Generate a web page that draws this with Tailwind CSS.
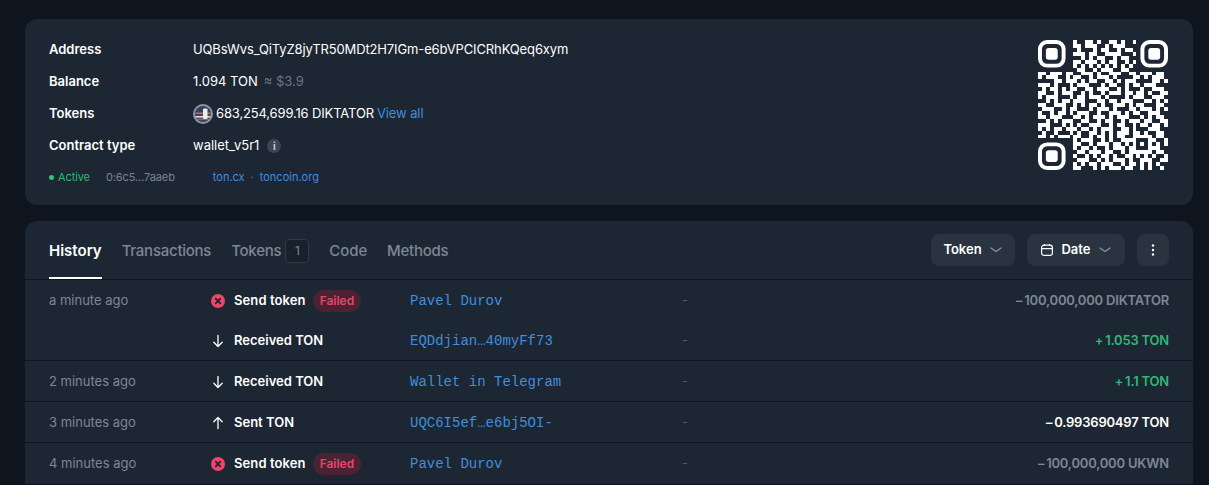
<!DOCTYPE html>
<html lang="en">
<head>
  <meta charset="UTF-8" />
  <title>Wallet</title>
  <script src="https://cdn.jsdelivr.net/npm/@tailwindcss/browser@4"></script>
</head>
<body class="h-[485px] overflow-hidden bg-[#0f151e] text-white font-['Inter',sans-serif]">
  <div class="px-[25px] pt-[19px] w-[1209px] pr-[16px] flex flex-col gap-4">

    <!-- INFO CARD -->
    <section class="h-[186px] rounded-xl bg-[#1d2633] pl-6 pr-[25px] flex justify-between">
      <div class="pt-[15px] text-[13px]">
        <div class="flex items-center h-8"><span class="w-36 font-semibold">Address</span><span class="tracking-[-0.125px]">UQBsWvs_QiTyZ8jyTR50MDt2H7IGm-e6bVPCICRhKQeq6xym</span></div>
        <div class="flex items-center h-8"><span class="w-36 font-semibold">Balance</span><span>1.094 TON</span><span class="ml-[6px] text-[#6b7583]">≈ $3.9</span></div>
        <div class="flex items-center h-8">
          <span class="w-36 font-semibold">Tokens</span>
          <svg class="w-5 h-5 mr-[3px]" viewBox="0 0 20 20">
            <circle cx="10" cy="10" r="10" fill="#8d95a3"/>
            <circle cx="10" cy="10" r="8" fill="#33415a"/>
            <rect x="2.5" y="8.5" width="15" height="1.6" fill="#c9656b"/>
            <rect x="2.5" y="12" width="15" height="1.6" fill="#d8dbe0"/>
            <rect x="2.5" y="14.6" width="15" height="1.4" fill="#b9555c"/>
            <rect x="10" y="4.5" width="4.5" height="10.5" rx="1" fill="#eceded"/>
          </svg>
          <span class="tracking-[-0.15px]">683,254,699.16 DIKTATOR</span><span class="ml-[3px] text-[#3f8fdc] tracking-[-0.1px]">View all</span>
        </div>
        <div class="flex items-center h-8">
          <span class="w-36 font-semibold">Contract type</span><span>wallet_v5r1</span>
          <span class="ml-2 w-[14px] h-[14px] rounded-full bg-[#3d4654] flex items-center justify-center text-[10px] font-bold text-[#c8ced6]">i</span>
        </div>
        <div class="flex items-center h-[31px] text-[11px]">
          <span class="w-[5px] h-[5px] rounded-full bg-[#2fc678] mr-[4px]"></span>
          <span class="text-[#2fb873] tracking-[-0.1px]">Active</span>
          <span class="ml-4 text-[#7a8491] tracking-[-0.1px]">0:6c5...7aaeb</span>
          <span class="ml-[38px] text-[#3f8fdc]">ton.cx</span>
          <span class="mx-[6px] text-[#6b7583]">·</span>
          <span class="text-[#3f8fdc]">toncoin.org</span>
        </div>
      </div>
      <div class="pt-[21px]">
        <svg id="qr" class="w-[130px] h-[130px]" viewBox="0 0 33 33" fill="#fff" shape-rendering="crispEdges"></svg>
      </div>
    </section>

    <!-- HISTORY CARD -->
    <section class="rounded-t-xl bg-[#1d2633]">
      <div class="h-[59px] pl-6 pr-6 flex items-center justify-between border-b border-[#0f151e]">
        <nav class="flex gap-5 h-full text-[15px] font-medium text-[#7d8795]">
          <a class="relative flex items-center pt-[2px] font-semibold text-white">History<span class="absolute left-0 right-0 bottom-0 h-0.5 bg-white"></span></a>
          <a class="flex items-center pt-[2px] tracking-[-0.25px]">Transactions</a>
          <a class="flex items-center pt-[2px] tracking-[-0.25px]">Tokens<span class="ml-1 w-6 h-6 rounded border border-[#2f3947] bg-[#18202b] flex items-center justify-center text-xs font-normal">1</span></a>
          <a class="flex items-center pt-[2px] tracking-[-0.1px]">Code</a>
          <a class="flex items-center pt-[2px] tracking-[-0.25px]">Methods</a>
        </nav>
        <div class="flex items-center gap-3 text-[13px] font-semibold">
          <button class="h-8 w-[84px] rounded-lg bg-[#2a3340] flex items-center justify-center gap-[7px]">Token
            <svg class="w-[14px] h-[14px]" viewBox="0 0 14 14" fill="none" stroke="#8b94a1" stroke-width="1.2" stroke-linecap="round" stroke-linejoin="round"><path d="M2 5l5 3.5L12 5"/></svg>
          </button>
          <button class="h-8 w-[98px] rounded-lg bg-[#2a3340] flex items-center justify-center gap-[7px]">
            <svg class="w-[14px] h-[14px]" viewBox="0 0 14 14" fill="none" stroke="#fff" stroke-width="1.2" stroke-linejoin="round"><rect x="1.6" y="2.2" width="10.8" height="10.2" rx="2.5"/><path d="M1.6 5.6h10.8M4.5 1v1.5M9.5 1v1.5"/></svg>
            Date
            <svg class="w-[14px] h-[14px]" viewBox="0 0 14 14" fill="none" stroke="#8b94a1" stroke-width="1.2" stroke-linecap="round" stroke-linejoin="round"><path d="M2 5l5 3.5L12 5"/></svg>
          </button>
          <button class="h-8 w-8 rounded-lg bg-[#2a3340] flex items-center justify-center">
            <svg class="w-4 h-4" viewBox="0 0 16 16" fill="#fff"><circle cx="8" cy="3.5" r="1.2"/><circle cx="8" cy="8" r="1.2"/><circle cx="8" cy="12.5" r="1.2"/></svg>
          </button>
        </div>
      </div>

      <div class="text-[13px]">
        <!-- a minute ago -->
        <div class="border-b border-[#0f151e] h-[81px]">
          <div class="h-[41px] pl-6 pr-6 grid grid-cols-[162px_199px_272px_1fr] items-center">
            <span class="text-[#7d8795]">a minute ago</span>
            <div class="flex items-center font-semibold"><svg class="w-[14px] h-[14px] mr-[9px]" viewBox="0 0 14 14"><circle cx="7" cy="7" r="7" fill="#f0446a"/><path d="M4.7 4.7l4.6 4.6M9.3 4.7L4.7 9.3" stroke="#1d2633" stroke-width="1.8" stroke-linecap="round"/></svg><span class="tracking-[0.1px]">Send token</span><span class="ml-[7px] h-[22px] px-[7px] rounded-full bg-[#4a2232] text-[#e8446a] text-xs font-semibold flex items-center">Failed</span></div>
            <span class="font-['Liberation_Mono',monospace] text-sm text-[#3f8fdc]">Pavel Durov</span>
            <div class="flex justify-between"><span class="text-[#4d5663]">-</span><span class="font-semibold text-[#7d8795] tracking-[-0.2px]">–&thinsp;100,000,000 DIKTATOR</span></div>
          </div>
          <div class="h-[39px] pl-6 pr-6 grid grid-cols-[162px_199px_272px_1fr] items-center">
            <span></span>
            <div class="flex items-center font-semibold"><svg class="w-[14px] h-[14px] mr-[9px]" viewBox="0 0 14 14" fill="none" stroke="#fff" stroke-width="1.3" stroke-linecap="round" stroke-linejoin="round"><path d="M7 1.5v11M2.8 8.3L7 12.5l4.2-4.2"/></svg>Received TON</div>
            <span class="font-['Liberation_Mono',monospace] text-sm text-[#3f8fdc]">EQDdjian…40myFf73</span>
            <div class="flex justify-between"><span class="text-[#4d5663]">-</span><span class="font-semibold text-[#2fb873] tracking-[-0.2px]">+&thinsp;1.053 TON</span></div>
          </div>
        </div>
        <!-- 2 minutes ago -->
        <div class="h-[41px] pt-px pl-6 pr-6 grid grid-cols-[162px_199px_272px_1fr] items-center border-b border-[#0f151e]">
          <span class="text-[#7d8795]">2 minutes ago</span>
          <div class="flex items-center font-semibold"><svg class="w-[14px] h-[14px] mr-[9px]" viewBox="0 0 14 14" fill="none" stroke="#fff" stroke-width="1.3" stroke-linecap="round" stroke-linejoin="round"><path d="M7 1.5v11M2.8 8.3L7 12.5l4.2-4.2"/></svg>Received TON</div>
          <span class="font-['Liberation_Mono',monospace] text-sm text-[#3f8fdc]">Wallet in Telegram</span>
          <div class="flex justify-between"><span class="text-[#4d5663]">-</span><span class="font-semibold text-[#2fb873] tracking-[-0.2px]">+&thinsp;1.1 TON</span></div>
        </div>
        <!-- 3 minutes ago -->
        <div class="h-[41px] pt-px pl-6 pr-6 grid grid-cols-[162px_199px_272px_1fr] items-center border-b border-[#0f151e]">
          <span class="text-[#7d8795]">3 minutes ago</span>
          <div class="flex items-center font-semibold"><svg class="w-[14px] h-[14px] mr-[9px]" viewBox="0 0 14 14" fill="none" stroke="#fff" stroke-width="1.3" stroke-linecap="round" stroke-linejoin="round"><path d="M7 12.5v-11M2.8 5.7L7 1.5l4.2 4.2"/></svg>Sent TON</div>
          <span class="font-['Liberation_Mono',monospace] text-sm text-[#3f8fdc]">UQC6I5ef…e6bj5OI-</span>
          <div class="flex justify-between"><span class="text-[#4d5663]">-</span><span class="font-semibold text-white tracking-[-0.2px]">–&thinsp;0.993690497 TON</span></div>
        </div>
        <!-- 4 minutes ago -->
        <div class="h-[41px] pt-px pl-6 pr-6 grid grid-cols-[162px_199px_272px_1fr] items-center">
          <span class="text-[#7d8795]">4 minutes ago</span>
          <div class="flex items-center font-semibold"><svg class="w-[14px] h-[14px] mr-[9px]" viewBox="0 0 14 14"><circle cx="7" cy="7" r="7" fill="#f0446a"/><path d="M4.7 4.7l4.6 4.6M9.3 4.7L4.7 9.3" stroke="#1d2633" stroke-width="1.8" stroke-linecap="round"/></svg><span class="tracking-[0.1px]">Send token</span><span class="ml-[7px] h-[22px] px-[7px] rounded-full bg-[#4a2232] text-[#e8446a] text-xs font-semibold flex items-center">Failed</span></div>
          <span class="font-['Liberation_Mono',monospace] text-sm text-[#3f8fdc]">Pavel Durov</span>
          <div class="flex justify-between"><span class="text-[#4d5663]">-</span><span class="font-semibold text-[#7d8795] tracking-[-0.2px]">–&thinsp;100,000,000 UKWN</span></div>
        </div>
      </div>
    </section>
  </div>

  <script>
    // QR modules, finder patterns are drawn apart
    const rows = [
      ".........#..##.#..##.#..#........",
      ".........##.###..#.###...........",
      "..........#...#.##..#.##.........",
      ".........###.##..####...#........",
      "...........#.#.##..#.##..........",
      ".........##.###.#.##..#.#........",
      ".........#.#.#.#.#.#.#.#.........",
      "..........##..#.###..##..........",
      "##.###.##..###.#..###..##.###.##.",
      "#.###..#.##..#.###.#....##.#.###.",
      "....##.###.#.##..##.#.###....##.#",
      "###.#...#.###...#.##..#.##.###...",
      ".#.##.#.##..##.###..#.#...#..###.",
      "##..#.###..#.#..#.###.##.##.#..##",
      "#.###...#.##.###.#....#.###..###.",
      "..#.#.##.###...##.##.###...##.#.#",
      "##..###..#.#.##.#..###.#.##...##.",
      ".###..#.##...#.###.#...##.###.#.#",
      "#..#.##.#.###..#..###.#.##..###..",
      "##.###...##.#.###.#.###...#.#.##.",
      "..#.#.###..##..#.##..#.###.##..##",
      "###...#.#.#..###..#.##..#.##.##.#",
      "#.#.##.###.##.#.###..##.#...###..",
      ".#..#...#.#..##.#.#.###.##.#..##.",
      "##.#.###.##..#.##.#.##..#####.##.",
      ".........#.###..#.#..####...##..#",
      ".........##..#.###.##.#.#.#.#.#.#",
      ".........#.##.#..#.###.##...###..",
      "..........##.###.##..#.######.##.",
      ".........#..#.#.##.#..##.#.#.#..#",
      "..........###..#.#.###.#..###..##",
      ".........#.#.##.###..#.##.#.#.#..",
      ".........##...#.#.###.##..#.#..#."
    ];
    let d = "";
    rows.forEach((r, y) => {
      [...r].forEach((c, x) => { if (c === "#") d += `M${x} ${y}h1v1h-1z`; });
    });
    const finder = (x, y) => `<rect x="${x + .5}" y="${y + .5}" width="6" height="6" rx="1.8" fill="none" stroke="#fff" shape-rendering="auto"/><rect x="${x + 2}" y="${y + 2}" width="3" height="3" rx=".7" shape-rendering="auto"/>`;
    document.getElementById("qr").innerHTML = `<path d="${d}"/>` + finder(0, 0) + finder(26, 0) + finder(0, 26);
  </script>
</body>
</html>
